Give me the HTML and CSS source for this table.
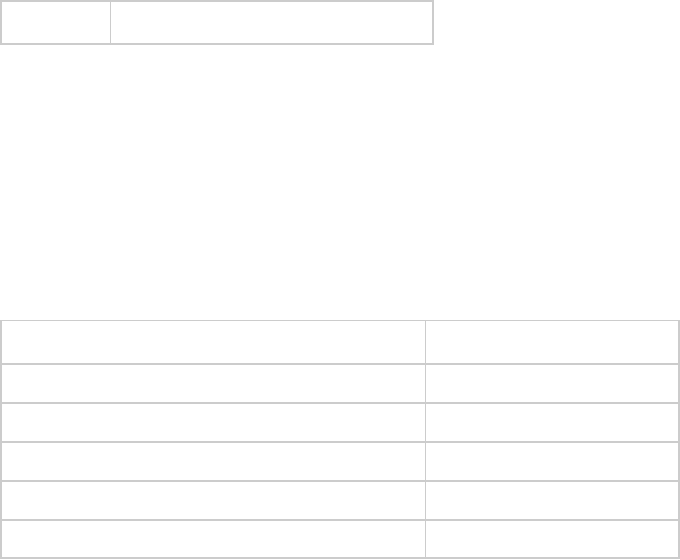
FILE: index.html
```html
<!DOCTYPE html>
<html>
<head>
<meta charset="utf-8">
<link rel="stylesheet" href="styles.css">
</head>
<body>
<div class="page">
  <div class="tbl-top">
    <div class="cell c1"></div>
    <div class="cell c2"></div>
  </div>
  <div class="tbl-bottom">
    <div class="row head"><div class="cell left"></div><div class="cell right"></div></div>
    <div class="row"><div class="cell left"></div><div class="cell right"></div></div>
    <div class="row"><div class="cell left"></div><div class="cell right"></div></div>
    <div class="row"><div class="cell left"></div><div class="cell right"></div></div>
    <div class="row"><div class="cell left"></div><div class="cell right"></div></div>
    <div class="row"><div class="cell left"></div><div class="cell right"></div></div>
  </div>
</div>
</body>
</html>
```
FILE: styles.css
```css
html, body {
  margin: 0;
  padding: 0;
  background: #ffffff;
  font-family: "Liberation Sans", Arial, sans-serif;
}
.page {
  display: flex;
  flex-direction: column;
  align-items: flex-start;
}
.tbl-top {
  display: flex;
  width: 430px;
  height: 41px;
  border: 2px solid #cccccc;
}
.tbl-top .c1 {
  width: 108px;
  border-right: 1px solid #cccccc;
}
.tbl-top .c2 {
  flex: 1;
}
.tbl-bottom {
  margin-top: 275px;
  width: 676px;
  border-left: 2px solid #cccccc;
  border-right: 2px solid #cccccc;
  border-top: 1px solid #cccccc;
  display: flex;
  flex-direction: column;
}
.row {
  display: flex;
  height: 37px;
  border-bottom: 2px solid #cccccc;
}
.row.head {
  height: 42px;
}
.row:last-child {
  height: 36px;
}
.row .left {
  width: 423px;
  border-right: 1px solid #cccccc;
}
.row .right {
  flex: 1;
}
```
